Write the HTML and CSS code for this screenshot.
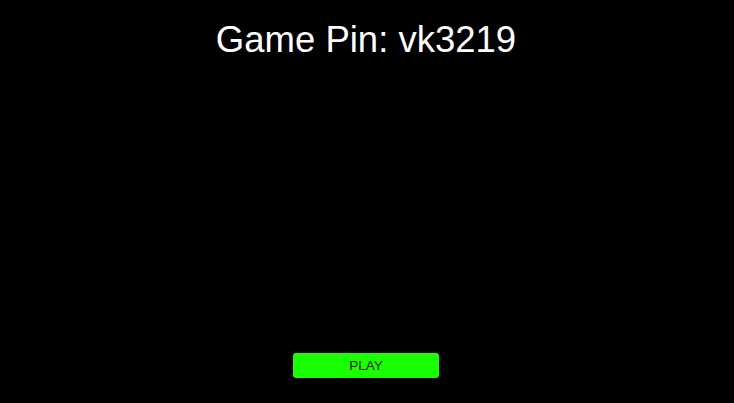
FILE: index.html
```html
<!DOCTYPE html>
<html>
<head>
<meta charset="utf-8">
<link rel="stylesheet" href="styles.css">
</head>
<body>
<main class="screen">
  <h1 class="pin">Game Pin: vk3219</h1>
  <div class="spacer"></div>
  <button class="play">PLAY</button>
</main>
</body>
</html>
```
FILE: styles.css
```css
html, body {
  margin: 0;
  padding: 0;
  background: #000;
  height: 100%;
}
.screen {
  height: 403px;
  display: flex;
  flex-direction: column;
  align-items: center;
  font-family: "Liberation Sans", Arial, sans-serif;
}
.pin {
  margin: 19px 0 0 -2px;
  font-weight: normal;
  font-size: 36.5px;
  line-height: 42px;
  color: #fff;
}
.spacer {
  flex: 1;
}
.play {
  width: 146px;
  height: 25px;
  margin: 0 0 25px -2px;
  background: #19ff00;
  border: none;
  border-radius: 3px;
  font-family: "Liberation Sans", Arial, sans-serif;
  font-size: 13.5px;
  color: #142412;
  padding: 0;
}
```
